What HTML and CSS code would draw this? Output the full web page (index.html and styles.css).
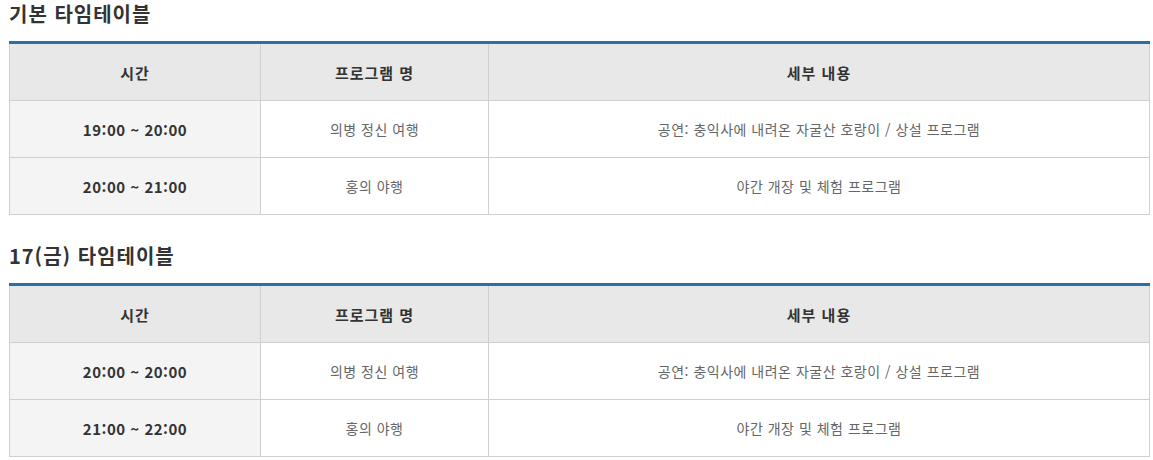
FILE: index.html
```html
<!DOCTYPE html>
<html lang="ko">
<head>
<meta charset="utf-8">
<title>타임테이블</title>
<link rel="stylesheet" href="styles.css">
</head>
<body>
<div class="page">
  <section class="block">
    <h3 class="title">기본 타임테이블</h3>
    <table class="tt">
      <colgroup><col class="c1"><col class="c2"><col class="c3"></colgroup>
      <thead>
        <tr><th>시간</th><th>프로그램 명</th><th>세부 내용</th></tr>
      </thead>
      <tbody>
        <tr><td class="time">19:00 ~ 20:00</td><td>의병 정신 여행</td><td>공연: 충익사에 내려온 자굴산 호랑이 / 상설 프로그램</td></tr>
        <tr><td class="time">20:00 ~ 21:00</td><td>홍의 야행</td><td>야간 개장 및 체험 프로그램</td></tr>
      </tbody>
    </table>
  </section>
  <section class="block">
    <h3 class="title">17(금) 타임테이블</h3>
    <table class="tt">
      <colgroup><col class="c1"><col class="c2"><col class="c3"></colgroup>
      <thead>
        <tr><th>시간</th><th>프로그램 명</th><th>세부 내용</th></tr>
      </thead>
      <tbody>
        <tr><td class="time">20:00 ~ 20:00</td><td>의병 정신 여행</td><td>공연: 충익사에 내려온 자굴산 호랑이 / 상설 프로그램</td></tr>
        <tr><td class="time">21:00 ~ 22:00</td><td>홍의 야행</td><td>야간 개장 및 체험 프로그램</td></tr>
      </tbody>
    </table>
  </section>
</div>
</body>
</html>
```
FILE: styles.css
```css
html, body {
  margin: 0;
  padding: 0;
  background: #fff;
}
body {
  font-family: "Noto Sans CJK KR", "Noto Sans", sans-serif;
  color: #333;
}
.page {
  padding: 0 4px 0 9px;
}
.block + .block {
  margin-top: 27px;
}
.title {
  margin: 0;
  font-size: 20px;
  line-height: 28px;
  font-weight: 700;
  letter-spacing: 1px;
  color: #333;
  padding-bottom: 13px;
}
.tt {
  width: 1141px;
  border-collapse: collapse;
  border-top: 3px solid #2a70a2;
  table-layout: fixed;
}
.c1 { width: 251px; }
.c2 { width: 228px; }
.c3 { width: auto; }
.tt th, .tt td {
  border: 1px solid #cfcfcf;
  height: 56px;
  padding: 0;
  text-align: center;
  vertical-align: middle;
}
.tt thead th {
  border-top: 0;
  background: #e8e8e8;
  font-size: 15px;
  font-weight: 700;
  letter-spacing: 1px;
  color: #333;
  height: 56px;
}
.tt td {
  font-size: 14px;
  letter-spacing: 0.5px;
  color: #666;
}
.tt td.time {
  background: #f4f4f4;
  font-size: 15px;
  font-weight: 700;
  letter-spacing: 0.5px;
  color: #333;
}
```
